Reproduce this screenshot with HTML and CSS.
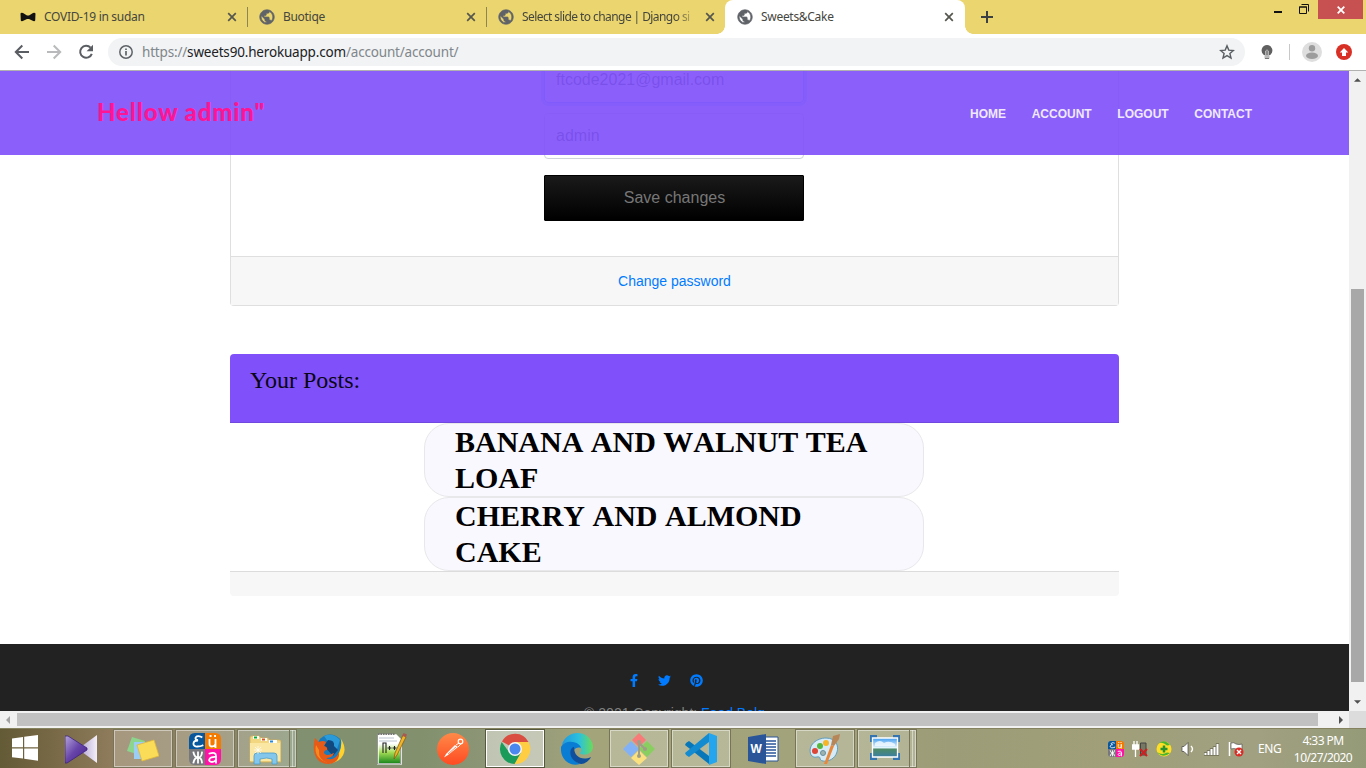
FILE: index.html
```html
<!DOCTYPE html>
<html lang="en">
<head>
<meta charset="utf-8">
<title>Sweets&amp;Cake</title>
<link rel="stylesheet" href="styles.css">
</head>
<body>
<svg class="defs" width="0" height="0">
  <symbol id="globe" viewBox="1 1 22 22"><path d="M12 2C6.480 2 2 6.480 2 12s4.480 10 10 10 10-4.480 10-10S17.520 2 12 2zm-1 17.930c-3.950-.49-7-3.850-7-7.930 0-.62.080-1.210.210-1.790L9 15v1c0 1.100.9 2 2 2v1.930zm6.900-2.540c-.26-.81-1-1.390-1.900-1.390h-1v-3c0-.55-.45-1-1-1H8v-2h2c.55 0 1-.45 1-1V7h2c1.100 0 2-.9 2-2v-.41c2.930 1.190 5 4.060 5 7.410 0 2.080-.8 3.970-2.100 5.390z" fill="#5f6368" stroke="#5f6368" stroke-width=".9"/></symbol>
  <symbol id="close" viewBox="0 0 10 10"><path d="M1.200 1.200l7.600 7.600M8.800 1.200L1.200 8.800" stroke="#55564e" stroke-width="1.700"/></symbol>
</svg>

<div class="tabs">
  <div class="tab first">
    <svg class="fav" viewBox="0 0 16 16"><path d="M.5 4.500Q1 3.500 3 4l4 2.400h2L13 4q2-.5 2.500.5l-.3 7q-.4 1-2 .5L9 10H7l-4.200 2q-1.600.5-2-.5z" fill="#111"/></svg>
    <span class="name">COVID-19 in sudan</span><svg class="x"><use href="#close"/></svg>
  </div>
  <div class="tab second">
    <svg class="fav"><use href="#globe"/></svg>
    <span class="name">Buotiqe</span><svg class="x"><use href="#close"/></svg>
  </div>
  <div class="tab third">
    <svg class="fav"><use href="#globe"/></svg>
    <span class="name fade">Select slide to change | Django si</span><svg class="x"><use href="#close"/></svg>
  </div>
  <div class="tab active">
    <svg class="fav"><use href="#globe"/></svg>
    <span class="name">Sweets&amp;Cake</span><svg class="x"><use href="#close"/></svg>
  </div>
  <svg class="plus" viewBox="0 0 12 12"><path d="M6 0v12M0 6h12" stroke="#3c4043" stroke-width="2"/></svg>
  <div class="window">
    <svg class="min" viewBox="0 0 8 2"><path d="M0 1h8" stroke="#111" stroke-width="2"/></svg>
    <svg class="max" viewBox="0 0 10 10"><path d="M.5 3h7v6.500h-7zM0 3h8M2.500.5h7v7" fill="none" stroke="#111"/></svg>
    <div class="quit"><svg viewBox="0 0 8 8"><path d="M.7.7l6.600 6.600M7.300.7L.7 7.300" stroke="#fff" stroke-width="1.800"/></svg></div>
  </div>
</div>

<div class="toolbar">
  <svg class="nav" viewBox="0 0 16 16"><path d="M15 8H2M8.300 1.500L1.800 8l6.500 6.500" fill="none" stroke="#5a5d61" stroke-width="2"/></svg>
  <svg class="nav" viewBox="0 0 16 16"><path d="M1 8h13M7.700 1.500L14.200 8l-6.500 6.500" fill="none" stroke="#b9babc" stroke-width="2"/></svg>
  <svg class="nav" viewBox="0 0 16 16"><path d="M12.600 3.700A6 6 0 1 0 13.800 9.800" fill="none" stroke="#5a5d61" stroke-width="2"/><path d="M15 .8v6.400H8.600z" fill="#5a5d61"/></svg>
  <div class="omni">
    <svg class="info" viewBox="0 0 16 16"><circle cx="8" cy="8" r="6.200" fill="none" stroke="#5f6368" stroke-width="1.500"/><path d="M8 7v4.500M8 4.400v1.600" stroke="#5f6368" stroke-width="1.700"/></svg>
    <span class="url">https://<b>sweets90.herokuapp.com</b>/account/account/</span>
    <svg class="star" viewBox="0 0 16 16"><path d="M8 1.900l1.800 4.200 4.600.4-3.500 3 1.100 4.500L8 11.600 4 14l1.100-4.500-3.500-3 4.600-.4z" fill="none" stroke="#5a5d61" stroke-width="1.400"/></svg>
  </div>
  <svg class="bulb" viewBox="0 0 12 14"><path d="M6 0a5.500 5.500 0 0 1 3.500 9.600V10h-7v-.4A5.500 5.500 0 0 1 6 0z" fill="#606060"/><path d="M4.500 10V6q1.500-2.300 3 0v4M6 6v4" fill="none" stroke="#ccc" stroke-width=".8"/><path d="M3.500 10h5v3.500h-5z" fill="#bbb"/><path d="M4 13.500h4" stroke="#777"/></svg>
  <i class="rule"></i>
  <svg class="avatar" viewBox="0 0 20 20"><circle cx="10" cy="10" r="10" fill="#dedede"/><circle cx="10" cy="6.200" r="3.200" fill="#9c9c9c"/><ellipse cx="10" cy="13.800" rx="6" ry="3.200" fill="#9c9c9c"/></svg>
  <svg class="update" viewBox="0 0 16 16"><circle cx="8" cy="8" r="8" fill="#d93025"/><path d="M8 4l4.300 4.500H10V12H6V8.500H3.700z" fill="#fff"/></svg>
</div>

<div class="stage">
  <div class="view">
    <header class="site">
      <div class="brand">Hellow admin"</div>
      <nav><a>HOME</a><a>ACCOUNT</a><a>LOGOUT</a><a>CONTACT</a></nav>
    </header>
    <main>
      <section class="card profile">
        <div class="form">
          <div class="field focus">ftcode2021@gmail.com</div>
          <div class="field">admin</div>
          <div class="save">Save changes</div>
        </div>
        <div class="cardfoot"><a>Change password</a></div>
      </section>
      <section class="posts">
        <h2>Your Posts:</h2>
        <div class="list">
          <div class="post">BANANA AND WALNUT TEA LOAF</div>
          <div class="post">CHERRY AND ALMOND CAKE</div>
        </div>
        <div class="postfoot"></div>
      </section>
    </main>
    <footer class="sitefoot">
      <div class="social">
        <svg class="fb" viewBox="0 0 320 512"><path fill="#007bff" d="M279 288l14-93h-89v-60c0-25 12-50 52-50h41V7s-37-7-72-7c-73 0-121 44-121 125v70H23v93h81v224h100V288z"/></svg>
        <svg class="tw" viewBox="0 0 512 512"><path fill="#007bff" d="M459 152c0 4 0 9 0 14 0 138-105 298-298 298-59 0-114-17-161-47 8 1 16 1 25 1 49 0 94-16 130-45-46-1-84-31-98-73 7 1 13 2 20 2 9 0 19-2 27-4-48-10-84-52-84-103v-1c14 8 30 13 47 13-28-19-46-51-46-87 0-19 5-37 14-53 52 64 129 105 216 110-2-8-3-16-3-24 0-58 47-105 105-105 30 0 57 13 76 33 24-5 46-13 66-25-8 24-24 45-46 58 21-2 42-8 60-16-14 21-31 39-50 54z"/></svg>
        <svg class="pin" viewBox="0 0 496 512"><path fill="#007bff" d="M496 256c0 137-111 248-248 248-26 0-50-4-73-11 10-17 25-43 31-64 3-11 15-59 15-59 8 15 31 28 56 28 74 0 127-68 127-152 0-81-66-141-151-141-106 0-162 71-162 148 0 36 19 81 50 95 5 2 7 1 8-3 1-3 5-20 7-27 1-2 0-5-2-7-10-12-18-35-18-56 0-54 41-106 111-106 60 0 103 41 103 100 0 66-34 112-77 112-24 0-42-20-36-44 7-29 20-60 20-81 0-52-74-45-74 25 0 21 7 36 7 36-30 127-34 128-30 179C66 438 0 355 0 256 0 119 111 8 248 8s248 111 248 248z"/></svg>
      </div>
      <p>© 2021 Copyright: <a>Food Bolg</a></p>
    </footer>
  </div>
  <div class="vscroll">
    <svg viewBox="0 0 8 4"><path d="M0 4L4 0l4 4z" fill="#505050"/></svg>
    <i></i>
    <svg viewBox="0 0 8 4"><path d="M0 0l4 4 4-4z" fill="#505050"/></svg>
  </div>
</div>
<div class="hscroll">
  <svg viewBox="0 0 4 8"><path d="M4 0L0 4l4 4z" fill="#a3a3a3"/></svg>
  <i></i>
  <svg viewBox="0 0 4 8"><path d="M0 0l4 4-4 4z" fill="#505050"/></svg>
  <b></b>
</div>

<div class="taskbar">
  <div class="start"><svg width="28" height="28" viewBox="0 0 28 28"><path d="M1 4.500l11-1.500v10.300H1zM13.200 2.800L27 1v12.300H13.200zM1 14.400h11v10.200L1 23.200zM13.200 14.400H27v12.300l-13.800-2z" fill="#fff"/></svg></div>
  <div class="app"><svg viewBox="0 0 32 32"><defs><linearGradient id="k1" x2="1" y2="1"><stop stop-color="#b4a4dc"/><stop offset=".5" stop-color="#6744a8"/><stop offset="1" stop-color="#40208a"/></linearGradient><linearGradient id="k2"><stop stop-color="#a99ac8"/><stop offset="1" stop-color="#f4effa"/></linearGradient></defs><path d="M32 2v28L13 16z" fill="url(#k2)"/><path d="M0 3l3 0 19 12v2L2 30H0z" fill="url(#k1)" stroke="#3c2380" stroke-width=".8"/></svg></div>
  <div class="app open"><svg viewBox="0 0 32 32"><path d="M5 4l13 4-5 14-13-4z" fill="#8bd58c"/><path d="M7 9h14v17H7z" fill="#9bcdf5"/><path d="M10 12l17-5 5 16-17 5z" fill="#fbdc58" stroke="#e0b838" stroke-width=".8"/></svg></div>
  <div class="app open"><svg viewBox="0 0 32 32"><use href="#lang"/><symbol id="lang" viewBox="0 0 32 32"><path d="M6 0h10v16H0V6q0-6 6-6z" fill="#08569c"/><path d="M16 0h10q6 0 6 6v10H16z" fill="#f57a00"/><path d="M0 16h16v16H6q-6 0-6-6z" fill="#77777c"/><path d="M16 16h16v10q0 6-6 6H16z" fill="#ff12a5"/><path d="M12.500 4C7 1.500 4 6 9 7.500 3 7.500 3 14 8.500 13.500q3 0 5-1M20.500 7v4q0 2.500 2.500 2.500t3.500-2.500V7M26.500 8v6M21.500 3h.1M26 3h.1M9 19.500v10M4.500 19.500q1 5 4.500 5t4-5M4.500 29.500q1-5 4.500-5t4 5M20.500 20.500q6.500-2 6.500 2.500v6.500M27 24c-8-.5-8.500 5-4 5q3 0 4-2.500" fill="none" stroke="#fff" stroke-width="1.800" stroke-linecap="square"/></symbol></svg></div>
  <div class="app open stack"><svg viewBox="0 0 32 32"><path d="M1 5q0-2 2-2h7l2 2h7l1 2h10q2 0 2 2v20H1z" fill="#f2d680" stroke="#d6b155" stroke-width=".8"/><path d="M4 3h6v3H4zM12 5h6v3h-6zM20 7h8v3h-8z" fill="#fff"/><path d="M5 3.500h3v2H5z" fill="#0bab35"/><path d="M13 5.500h3v2h-3z" fill="#d85722"/><path d="M21 7.500h3v2h-3z" fill="#2588d9"/><path d="M1 10h30v18H1z" fill="#fae7a3"/><path d="M5 31V23q0-3 3-3h17q3 0 3 3v8h-5v-5q-5-2-12 0v5z" fill="#84c7ed" stroke="#4a9dcc" stroke-width=".8"/><path d="M9 13v8M5 17h8M6 14l6 6M12 14l-6 6" stroke="#fff" stroke-width=".7"/></svg></div>
  <div class="app"><svg viewBox="0 0 32 32"><circle cx="17" cy="14.500" r="13" fill="#177bbd"/><path d="M11 3q9-4 16 4l-3 9-8-6z" fill="#2b9ad9"/><path d="M15 7q7 0 6 6l4 4-5 6-9-10z" fill="#124a80"/><path d="M28 6q8 13-2 21-7 5-14 2 11 0 14-9 3-6 2-14z" fill="#ffd22e"/><path d="M2 5l4 4q4-2 7 0l-2 4q4 1 3 4-3 0-3 3c3 4 7 1 10 0-1 4-5 5-8 5 5 3 11 0 13-6 1 7-4 12-11 12C4 31-2 20 2 5z" fill="#e65b17"/><path d="M3 12q-3 13 12 18-10-3-9-13z" fill="#f58b20"/></svg></div>
  <div class="app"><svg viewBox="0 0 32 32"><defs><linearGradient id="np" x2="0" y2="1"><stop offset=".3" stop-color="#fff"/><stop offset=".6" stop-color="#a3dc55"/><stop offset="1" stop-color="#128219"/></linearGradient></defs><path d="M3 2h18l5 5v24H3z" fill="url(#np)" stroke="#fff" stroke-width="1.500"/><path d="M2.500 1v30h23V8" fill="none" stroke="#777" stroke-width=".7"/><path d="M4 5h15M4 8h18" stroke="#bbc4cf"/><path d="M3 1h17" stroke="#777" stroke-width="2" stroke-dasharray="1.500 1"/><path d="M8 20V10h3v10M12.500 15h4M14.500 13v4M17.500 15h4M19.500 13v4" fill="none" stroke="#222" stroke-width="1.100"/><path d="M19 26l1-6L28 2l3 2-9 18z" fill="#f1b528" stroke="#805513" stroke-width=".7"/><path d="M27 3l1.500-3L32 1.500 31 4z" fill="#a85a50"/></svg></div>
  <div class="app"><svg viewBox="0 0 32 32"><defs><linearGradient id="pm" x2="0" y2="1"><stop stop-color="#ff8a48"/><stop offset="1" stop-color="#ff4a22"/></linearGradient></defs><circle cx="16" cy="16" r="16" fill="url(#pm)"/><path d="M9 21l9-9 3 2-10 8-4 2.500z" fill="#fff"/><circle cx="23.500" cy="8.500" r="2.300" fill="none" stroke="#fff" stroke-width="1.200"/><path d="M19 12l3-2M21 14l3-3" stroke="#fff" stroke-width=".9"/><path d="M11 21l8-7" stroke="#ff7040" stroke-width=".8"/></svg></div>
  <div class="app open current"><svg viewBox="0 0 32 32"><path d="M16 16L3 8.500A15 15 0 0 1 29.500 9H16z" fill="#d94e40"/><path d="M29.500 9A15 15 0 0 1 15 31l7-12-6-10z" fill="#ffcd44"/><path d="M2.700 9A15 15 0 0 0 15.500 31l6.500-11.500L10 19z" fill="#1a9b59"/><circle cx="16" cy="16" r="7" fill="#f5f5f5"/><circle cx="16" cy="16" r="5.500" fill="#4a87ee"/></svg></div>
  <div class="app"><svg viewBox="0 0 32 32"><defs><linearGradient id="eg"><stop stop-color="#2098df"/><stop offset=".55" stop-color="#2bc1de"/><stop offset="1" stop-color="#68dc58"/></linearGradient></defs><path d="M1 12C5-4 29-4 32 13c0 7-6 10-12 8-2-1 1-2 0-5-2-7-14-7-19-4z" fill="url(#eg)"/><path d="M0 14c5-9 19-5 20 1-9-3-12 11-1 16C8 34-1 26 0 14z" fill="#087dd3"/><path d="M13 14c-4 0-7 11 4 16 5 3 11-2 13-6-9 4-17 0-17-10z" fill="#0f4f9c"/></svg></div>
  <div class="app open"><svg viewBox="0 0 32 32"><path d="M16 0l7 7-7 7-7-7z" fill="#f87a79"/><path d="M8 8l8 8-8 8-8-8z" fill="#83b1f5"/><path d="M24 8l8 8-8 8-8-8z" fill="#88cf60"/><path d="M16 17l8 8-8 7-8-7z" fill="#fbe080"/><path d="M16 9v15M16 10l6 6" stroke="#a09d87" stroke-width="2"/><circle cx="16" cy="9" r="2" fill="#a09d87"/><circle cx="22" cy="16" r="2" fill="#a09d87"/><circle cx="16" cy="23" r="2" fill="#a09d87"/></svg></div>
  <div class="app open"><svg viewBox="0 0 32 32"><path d="M1 10l3-2 20 15v8L0 12z" fill="#0877b9"/><path d="M0 20L24 0v9L4 24l-3-2z" fill="#138bd0"/><path d="M24 0l8 3v26l-8 3z" fill="#25a5ed"/></svg></div>
  <div class="app"><svg viewBox="0 0 32 32"><path d="M17 4h14v24H17z" fill="#fff" stroke="#2a5699"/><path d="M19 8h10M19 11h10M19 14h10M19 17h10M19 20h10M19 23h10" stroke="#2a5699" stroke-width="1.300"/><path d="M1 4l18-3v30L1 28z" fill="#2a5699"/><text x="3.500" y="20" class="word">W</text></svg></div>
  <div class="app open"><svg viewBox="0 0 32 32"><path d="M2 22C-2 12 8 5 17 5c10 0 13 8 11 14-2 7-9 10-14 9-5-1-1-5-6-4-3 1-5-1-6-2z" fill="#d7ebf7" stroke="#609dbe"/><circle cx="11" cy="13" r="3" fill="#54b63e"/><circle cx="17" cy="10" r="3" fill="#f6b526"/><circle cx="6" cy="18" r="3" fill="#dd4537"/><circle cx="14" cy="20" r="2.500" fill="#a0b2ad" stroke="#668fa0"/><path d="M15 31l7-19 3 1-7 18z" fill="#e7873a"/><path d="M22 12L24 3l7-2-1 5-5 7z" fill="#b68558"/></svg></div>
  <div class="app open stack last"><svg viewBox="0 0 32 32"><defs><linearGradient id="sky" x2="0" y2="1"><stop stop-color="#3f9cf0"/><stop offset=".5" stop-color="#e4f5fd"/><stop offset=".6" stop-color="#4c8a68"/><stop offset="1" stop-color="#3a7fa5"/></linearGradient></defs><path d="M1 2h7v7H1zM24 2h7v7h-7zM1 20h7v7H1zM24 20h7v7h-7z" fill="#3475b1"/><path d="M3.500 5h25v19h-25z" fill="url(#sky)" stroke="#fff" stroke-width="1.300"/><path d="M6 10q5-4 9 0 5-3 11 1v2H6z" fill="#f5faff" opacity=".8"/></svg></div>
  <div class="tray">
    <svg viewBox="0 0 32 32"><use href="#lang"/></svg>
    <svg viewBox="0 0 16 16"><path d="M8.500 2h5.500v12H8.500z" fill="#777762" stroke="#444"/><path d="M2 0v4M5 0v4M.5 4h6v4h-6zM3.500 8v8" stroke="#fff" stroke-width="1.300" fill="#fff"/><path d="M8 8l7 7M15 8l-7 7" stroke="#cd2020" stroke-width="2"/></svg>
    <svg viewBox="0 0 16 16"><circle cx="8" cy="8" r="7.500" fill="#ffdf25"/><path d="M2 3Q8-3 14 4l-3 .5Q6 0 2 3zM1 11q6 7 13 1l-3-.5q-5 3-10-.5z" fill="#49b531"/><path d="M8 4.500v7M4.500 8h7" stroke="#279330" stroke-width="2.500"/></svg>
    <svg viewBox="0 0 16 16"><path d="M2 5.500h2l4-4v13l-4-4H2z" fill="#fff" stroke="#444" stroke-width=".7"/><path d="M11 5q3 3 0 6" fill="none" stroke="#fff" stroke-width="1.400"/></svg>
    <svg viewBox="0 0 16 16"><path d="M1.500 14.500v-3M4.500 14.500v-5M7.500 14.500v-7M10.500 14.500v-9M13.500 14.500v-12" stroke="#555540" stroke-width="3.200"/><path d="M1.500 14v-2M4.500 14v-4M7.500 14V8M10.500 14V6M13.500 14V3" stroke="#fff" stroke-width="2.200"/></svg>
    <svg viewBox="0 0 16 16"><path d="M1.500 1v14" stroke="#fff" stroke-width="1.500"/><path d="M3 2q3-1 5 1 3 1 6 0v6q-3 1-6-1-2-1-5 0z" fill="#fff" stroke="#555" stroke-width=".7"/><circle cx="11" cy="11" r="4.500" fill="#d92d28"/><path d="M9 9l4 4M13 9l-4 4" stroke="#fff" stroke-width="1.400"/></svg>
  </div>
  <span class="eng">ENG</span>
  <div class="clock"><span>4:33 PM</span><span>10/27/2020</span></div>
</div>
</body>
</html>
```
FILE: styles.css
```css
* { box-sizing: border-box; }
body { margin: 0; width: 1366px; height: 768px; overflow: hidden; display: flex; flex-direction: column; background: #fff; font-family: "Liberation Sans", Arial, sans-serif; }
svg { display: block; flex: none; }
.defs { position: absolute; }

.tabs { height: 34px; flex: none; display: flex; background: #ebd56e; padding-left: 8px; font: 12px/34px "Noto Sans", sans-serif; letter-spacing: -.3px; color: #45463e; }
.tab { position: relative; width: 239px; display: flex; align-items: center; padding: 0 11px 0 12px; }
.tab.first { width: 240px; }
.tab.first::after, .tab.second::after { content: ""; position: absolute; right: 0; top: 7px; width: 1px; height: 20px; background: #8f8550; }
.tab.second { padding-left: 11px; }
.tab.third { width: 238px; padding: 0 10px 0 11px; }
.tab.active { width: 240px; background: #fff; border-radius: 8px 8px 0 0; }
.tab.active::before, .tab.active::after { content: ""; position: absolute; bottom: 0; width: 8px; height: 8px; }
.tab.active::before { left: -8px; background: radial-gradient(circle at 0 0, transparent 7.5px, #fff 8px); }
.tab.active::after { right: -8px; background: radial-gradient(circle at 100% 0, transparent 7.5px, #fff 8px); }
.fav { width: 16px; height: 16px; margin-right: 8px; }
.name { white-space: nowrap; margin-right: auto; }
.name.fade { width: 175px; letter-spacing: -.58px; -webkit-mask-image: linear-gradient(90deg, #000 88%, transparent); mask-image: linear-gradient(90deg, #000 88%, transparent); }
.x { width: 10px; height: 10px; }
.plus { width: 12px; height: 12px; margin: 11px 0 0 16px; }
.window { display: flex; margin-left: auto; padding-right: 3px; }
.min { width: 8px; height: 2px; margin: 11px 17px 0 0; }
.max { width: 10px; height: 10px; margin: 4px 9px 0 0; }
.quit { width: 45px; height: 19px; background: #c75050; display: grid; place-items: center; }
.quit svg { width: 8px; height: 8px; }

.toolbar { height: 37px; flex: none; display: flex; align-items: center; padding: 0 14px; border-bottom: 1px solid #b1b1b1; background: #fff; }
.nav { width: 16px; height: 16px; margin-right: 16px; }
.omni { width: 1137px; height: 28px; border-radius: 14px; background: #f1f3f4; display: flex; align-items: center; padding: 0 10px; margin-left: -2px; }
.info, .star { width: 16px; height: 16px; }
.url { font: 13.5px/26px "Noto Sans", sans-serif; letter-spacing: -.18px; color: #80868b; margin: 0 auto 0 8px; white-space: nowrap; }
.url b { font-weight: 400; color: #202124; }
.bulb { width: 12px; height: 14px; margin-left: 16px; }
.rule { width: 1px; height: 16px; background: #c8c8c8; margin: 0 12px 0 16px; }
.avatar { width: 20px; height: 20px; }
.update { width: 16px; height: 16px; margin-left: 14px; }

.stage { height: 640px; flex: none; display: flex; }
.view { position: relative; width: 1349px; height: 640px; overflow: hidden; }
.site { position: absolute; inset: 0 0 auto 0; z-index: 2; height: 84px; background: rgba(128, 80, 250, .91); display: flex; align-items: center; justify-content: space-between; padding: 0 97px 0 97px; }
.brand { font: 900 24px/30px Lato, sans-serif; letter-spacing: .85px; color: #ff1493; white-space: nowrap; padding-bottom: 2px; }
.site nav { display: flex; gap: 25.6px; font-size: 12px; font-weight: 700; color: #f0e9fe; padding-top: 2px; }
main { width: 889px; margin: 0 auto 0 230px; }
.profile { border: 1px solid #dfdfdf; border-top: 0; border-radius: 0 0 4px 4px; height: 235px; display: flex; flex-direction: column; justify-content: space-between; }
.form { width: 260px; margin: -14px 0 0 313px; display: grid; gap: 10px; }
.field { height: 46px; border: 1px solid #ced4da; border-radius: 4px; padding: 0 11px; font-size: 16px; line-height: 44px; color: #495057; }
.field.focus { border-color: #80bdff; box-shadow: 0 0 0 3px #bfdeff; }
.save { height: 46px; margin-top: 6px; border: 1px solid #000; border-radius: 1px; background: linear-gradient(#1a1a1a, #000); color: #777; font-size: 16px; line-height: 44px; text-align: center; padding-left: 1px; }
.cardfoot { height: 49px; border-top: 1px solid #dfdfdf; background: #f7f7f7; text-align: center; font-size: 14px; line-height: 49px; color: #007bff; }
.posts { margin-top: 48px; }
.posts h2 { margin: 0; height: 69px; border-radius: 4px 4px 0 0; background: #8050fb; border-bottom: 1px solid #7048df; padding: 12px 20px; font: 24px/29px "Liberation Serif", serif; color: #0a0614; }
.list { width: 500px; margin: 0 auto 0 194px; }
.post { height: 74px; border: 1px solid #e8e8ea; border-radius: 25px; background: #f9f8ff; padding: 0 50px 0 30px; font: bold 30px/36px "Liberation Serif", serif; font-kerning: none; color: #000; }
.postfoot { height: 25px; border-top: 1px solid #dcdcdc; background: #f7f7f7; border-radius: 0 0 4px 4px; }
.sitefoot { margin-top: 48px; height: 120px; background: #222; padding-top: 30px; color: #808080; font-size: 14px; }
.sitefoot a { color: #007bff; }
.social { display: flex; margin-left: 629px; }
.social svg { height: 13px; }
.fb { width: 10px; }
.tw { width: 13px; margin-left: 19px; }
.pin { width: 13px; margin-left: 19px; }
.sitefoot p { margin: 16px 0 0; line-height: 20px; text-align: center; }

.vscroll { width: 17px; background: #f1f1f1; display: flex; flex-direction: column; align-items: center; padding: 7px 0; }
.vscroll svg { width: 7px; height: 4px; }
.vscroll i { width: 13px; height: 393px; background: #a8a8a8; margin: 207px 0 auto; }
.hscroll { height: 17px; flex: none; background: #f1f1f1; display: flex; align-items: center; padding-left: 6px; }
.hscroll svg { width: 4px; height: 8px; }
.hscroll i { width: 1301px; height: 13px; background: #c1c1c1; margin: 0 21px 0 7px; }
.hscroll b { width: 17px; height: 17px; background: #dcdcdc; margin-left: auto; }

.taskbar { height: 40px; flex: none; display: flex; border-top: 1px solid #85835f; background: linear-gradient(90deg, #635a36 0, #7b6b48 60px, #8d7b5b 110px, #8d8465 220px, #819070 290px, #82906e 420px, #92997a 520px, #a3a47a 590px, #a2a37b 800px, #9c9d78 950px, #a09f7a 1120px, #a1a081 1260px, #949a77 1366px); }
.start { width: 50px; padding: 5px 0 0 11px; }
.app { width: 60px; margin: 0 1px; display: grid; place-items: center; flex: none; }
.app svg { width: 32px; height: 32px; }
.app.open { border: 1px solid #77745a; box-shadow: inset 0 0 0 1px rgba(255, 255, 255, .45); background: rgba(255, 255, 255, .22); }
.app.current { border-color: #55573f; background: rgba(255, 255, 255, .45); box-shadow: inset 0 0 0 1px #fff; }
.app.stack { position: relative; padding-right: 4px; }
.app.stack::after { content: ""; position: absolute; right: 3px; top: 0; width: 2px; height: 37px; border-left: 1px solid #77745a; border-right: 1px solid rgba(255, 255, 255, .45); }
.word { font: bold 12px "Liberation Sans", sans-serif; fill: #fff; }
.tray { display: flex; gap: 8px; align-items: center; margin-left: 190px; }
.tray svg { width: 16px; height: 16px; }
.eng, .clock { font: 12px/18px "Noto Sans", sans-serif; color: #fff; }
.eng { margin: 11px 0 0 14px; width: 23px; letter-spacing: -.4px; }
.clock { display: flex; flex-direction: column; align-items: center; width: 60px; margin: 3px 0 0 12px; line-height: 17px; letter-spacing: -.55px; white-space: nowrap; }
```
